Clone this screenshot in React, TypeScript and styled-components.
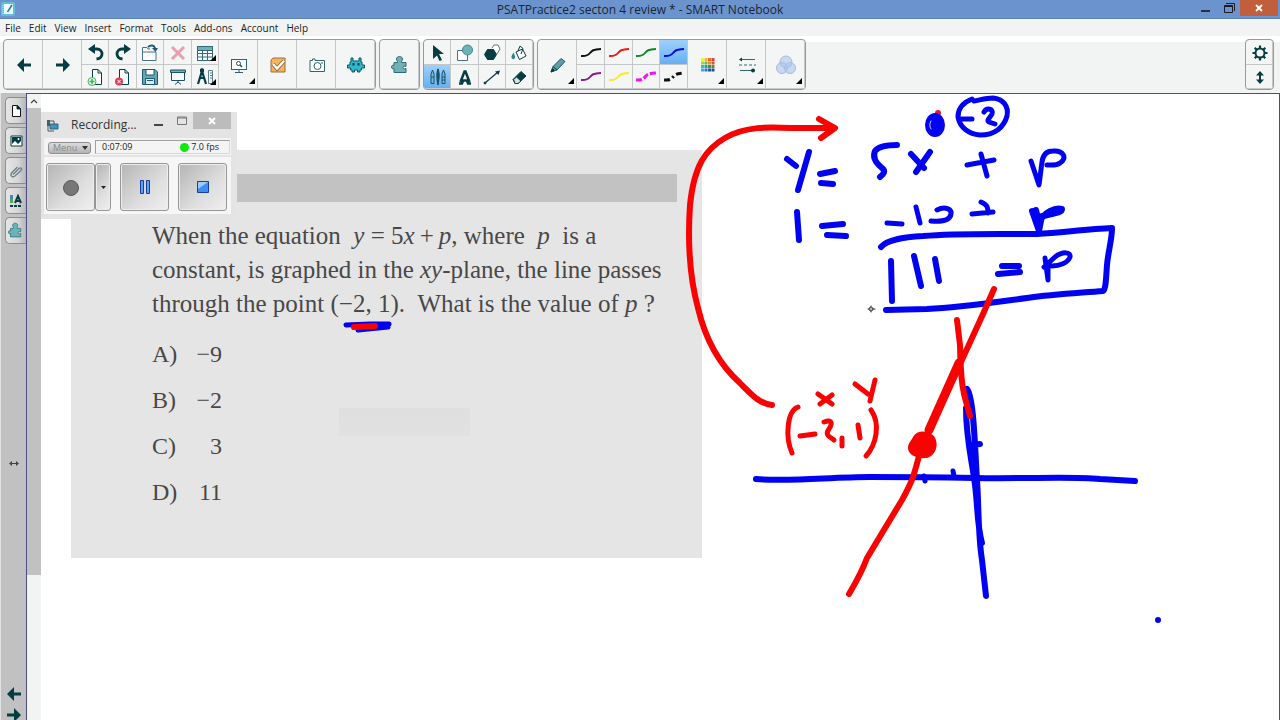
import React from 'react';
import styled, { createGlobalStyle, css } from 'styled-components';

const INK = '#063d42';
const TEAL = '#6fb1b6';
const UI = "'Open Sans', 'Noto Sans', sans-serif";

const GlobalStyle = createGlobalStyle`
  * { box-sizing: border-box; }
  html, body { margin: 0; height: 100%; }
  body { font-family: ${UI}; color: #222; background: #fff; }
  button { font: inherit; color: inherit; padding: 0; margin: 0; border: 0; background: none; }
  svg { display: block; flex: none; }
`;

const Window = styled.div`
  display: flex;
  flex-direction: column;
  height: 100vh;
  overflow: hidden;
`;

const TitleBar = styled.header`
  display: grid;
  grid-template-columns: 1fr auto 1fr;
  height: 19px;
  flex: none;
  background: #6b94cf;
  border-bottom: 1px solid #5d84bd;
`;
const TitleIcon = styled.div`
  padding: 2px 1px;
`;
const Title = styled.h1`
  margin: 0;
  font-size: 12px;
  font-weight: 400;
  line-height: 20px;
  color: #1c2430;
`;
const WindowControls = styled.div`
  display: flex;
  justify-content: flex-end;
  padding-right: 2px;
`;
const ControlButton = styled.button<{ $close?: boolean }>`
  display: flex;
  justify-content: center;
  width: ${p => (p.$close ? 38 : 23)}px;
  height: 16px;
  background: ${p => (p.$close ? '#c15f3d' : 'transparent')};
`;

const MenuBar = styled.nav`
  display: flex;
  gap: 8px;
  height: 17px;
  flex: none;
  padding-left: 5px;
  background: #f2f4f4;
`;
const MenuItem = styled.button`
  font-size: 10px;
  line-height: 18px;
  color: #222;
`;

const Toolbar = styled.div`
  display: flex;
  gap: 3px;
  flex: none;
  padding: 3px 6px 3px 3px;
  background: linear-gradient(#fff 6px, #f2f4f4 6px);
`;
const Group = styled.div<{ $end?: boolean }>`
  display: flex;
  height: 51px;
  border: 1px solid #999;
  border-radius: 4px;
  overflow: hidden;
  background: #f4f5f5;
  ${p => p.$end && css`margin-left: auto;`}
`;
const PairGrid = styled.div<{ $cols: number; $width: number }>`
  display: grid;
  grid-template-columns: repeat(${p => p.$cols}, 1fr);
  grid-template-rows: 25px 24px;
  width: ${p => p.$width}px;
`;
const Tool = styled.button<{ $large?: boolean; $active?: boolean; $more?: boolean }>`
  position: relative;
  display: flex;
  align-items: center;
  justify-content: center;
  ${p => p.$large && css`width: 39px;`}
  background: ${p => (p.$active ? 'linear-gradient(#9fd0fb, #62aff2)' : 'transparent')};
  box-shadow: inset -1px 0 #c6c8c8, inset 0 -1px #c6c8c8;
  ${p => p.$more && css`
    &::after {
      content: '';
      position: absolute;
      right: 3px;
      bottom: ${p.$large ? 5 : 4}px;
      border: 3px solid #000;
      border-top-color: transparent;
      border-left-color: transparent;
    }
  `}
`;

const Workspace = styled.div`
  display: flex;
  flex: 1;
  min-height: 0;
  background: #c1c1c1;
`;
const SideBar = styled.aside`
  display: flex;
  flex-direction: column;
  width: 26px;
  padding-top: 4px;
  border-left: 1px solid #e2e2e2;
`;
const SideTabs = styled.div`
  display: flex;
  flex-direction: column;
  gap: 3px;
  padding-left: 4px;
`;
const SideTab = styled.button`
  display: flex;
  align-items: center;
  justify-content: center;
  height: 27px;
  border: 1px solid #8d8d8d;
  border-right: 0;
  border-radius: 5px 0 0 5px;
  background: linear-gradient(90deg, #e6e6e6, #d6d6d6 60%, #b5b5b5);
`;
const SplitHandle = styled.div`
  display: flex;
  flex: 1;
  align-items: center;
  justify-content: center;
  padding-bottom: 4px;
`;
const PageTurn = styled.div`
  display: flex;
  flex-direction: column;
  align-items: center;
  gap: 7px;
  margin-bottom: -2px;
`;

const PageArea = styled.div`
  display: flex;
  flex: 1;
  min-width: 0;
  border: 1px solid #4a4a8c;
  border-width: 1px 1px 0 1px;
  background: #fff;
`;
const ScrollTrack = styled.div`
  display: flex;
  flex-direction: column;
  width: 14px;
  background: #f2f4f4;
`;
const ScrollUp = styled.button`
  display: flex;
  align-items: center;
  justify-content: center;
  height: 14px;
`;
const ScrollThumb = styled.div`
  height: calc(75% - 3px);
  background: #c1c1c1;
`;
const Canvas = styled.main`
  position: relative;
  flex: 1;
  min-width: 0;
  overflow: hidden;
`;
const Ink = styled.svg`
  position: absolute;
  left: 0;
  top: 0;
  fill: none;
  stroke-linecap: round;
  stroke-linejoin: round;
  pointer-events: none;
`;

const Problem = styled.article`
  position: absolute;
  left: 30px;
  top: 56px;
  width: 631px;
  padding: 24px 25px 49px 81px;
  background: linear-gradient(#dfdfdf, #e1e1e1) 268px 258px / 131px 28px no-repeat #e5e5e5;
  font-family: 'Liberation Serif', serif;
  font-size: 25px;
  line-height: 34px;
  color: #484848;
`;
const HeadingBand = styled.div`
  height: 28px;
  margin-bottom: 17px;
  background: #c2c2c2;
`;
const Question = styled.p`
  margin: 0 0 16px;
  white-space: nowrap;
`;
const Choices = styled.ul`
  display: flex;
  flex-direction: column;
  gap: 12px;
  margin: 0;
  padding: 0;
  list-style: none;
  font-size: 24px;
`;
const Choice = styled.li`
  display: grid;
  grid-template-columns: 30px 40px;
`;
const Answer = styled.span`
  text-align: right;
`;

const Recorder = styled.section`
  position: absolute;
  left: -3px;
  top: 18px;
  width: 199px;
  padding: 0 6px 5px;
  background: #e4e4e4;
`;
const RecorderTitle = styled.header`
  display: flex;
  align-items: center;
  height: 26px;
  padding-left: 1px;
`;
const RecorderName = styled.h2`
  flex: 1;
  margin: 0;
  padding-left: 12px;
  font-size: 12px;
  font-weight: 400;
  line-height: 26px;
  color: #333;
`;
const RecorderControl = styled.button<{ $close?: boolean }>`
  display: flex;
  align-self: flex-start;
  align-items: center;
  justify-content: center;
  width: ${p => (p.$close ? 38 : 23)}px;
  height: 17px;
  background: ${p => (p.$close ? '#bcbcbc' : 'transparent')};
`;
const RecorderStatus = styled.div`
  display: flex;
  gap: 4px;
  height: 17px;
  padding: 2px 1px 0 4px;
  background: #f4f4f4;
  font-size: 9px;
`;
const MenuButton = styled.button`
  display: flex;
  align-items: center;
  gap: 5px;
  width: 43px;
  height: 12px;
  margin-top: 2px;
  padding: 0 4px;
  border: 1px solid #8e8e8e;
  border-radius: 3px;
  background: linear-gradient(#dcdcdc, #b4b4b4);
  color: #8a8a8a;
  line-height: 10px;
  overflow: hidden;
`;
const Readout = styled.div`
  display: flex;
  align-items: center;
  flex: 1;
  height: 14px;
  padding: 0 10px 0 6px;
  border: 1px solid #a0a0a0;
  border-bottom-color: #d8d8d8;
  border-right-color: #d8d8d8;
  color: #222;
  line-height: 12px;
`;
const Fps = styled.span`
  display: flex;
  align-items: center;
  gap: 2px;
  margin-left: auto;
`;
const Lamp = styled.i`
  width: 9px;
  height: 9px;
  border-radius: 50%;
  background: #0bea0b;
`;
const RecorderButtons = styled.div`
  display: flex;
  justify-content: space-between;
  margin-top: 2px;
  padding: 6px 4px 3px 2px;
  height: 57px;
  background: #f6f6f6;
`;
const RecordSplit = styled.div`
  display: flex;
`;
const MediaButton = styled.button<{ $narrow?: boolean }>`
  display: flex;
  align-items: center;
  justify-content: center;
  width: ${p => (p.$narrow ? 16 : 49)}px;
  height: 48px;
  border: 1px solid #969696;
  border-radius: 3px;
  box-shadow: inset 0 0 0 1px #eee;
  background: linear-gradient(135deg, #b4b4b4, #dedede 60%, #efefef);
`;

type IconProps = { children: React.ReactNode; w?: number; h?: number };
const Icon = ({ children, w = 20, h = 20 }: IconProps) => (
  <svg width={w} height={h} viewBox={`0 0 ${w} ${h}`} fill="none" stroke={INK} aria-hidden="true">
    {children}
  </svg>
);

const arrowLeft = <path d="M1 7 8 0V5.500H15V8.500H8V14Z" fill={INK} stroke="none" />;
const arrowRight = <path d="M15 7 8 0V5.500H1V8.500H8V14Z" fill={INK} stroke="none" />;
const docShape = 'M6.500 2.500H12L15.500 6V17.500H6.500Z';
const puzzle =
  'M3 7.500H6.500C7 6.500 5.500 5.500 5.500 4C5.500 2.500 6.800 1.500 8.500 1.500S11.500 2.500 11.500 4C11.500 5.500 10 6.500 10.500 7.500H15V11.500C14 11.500 13 10.500 12 12C11.500 13.500 13 14.500 15 13.500V17.500H3V13.500C2 14.500 .5 13.500 .5 12S2 9.500 3 10.500Z';

const pageTools: [string, React.ReactNode, boolean?][] = [
  ['Undo', <g key="a"><path d="M6 6H11C14 6 16 8 16 11S14 15.500 10.500 16" strokeWidth="2.800" /><path d="M2 6 9 1V11Z" fill={INK} stroke="none" /></g>],
  ['Redo', <g key="a"><path d="M14 6H9C6 6 4 8 4 11S6 15.500 9.500 16" strokeWidth="2.800" /><path d="M18 6 11 1V11Z" fill={INK} stroke="none" /></g>],
  ['Open', <g key="a" stroke="#46728a"><path d="M2.500 17.500V4.500H7L8 6H10M16 9V17.500H2.500M2.500 9H16" fill="#fff" /><path d="M8 4C11 1.500 14 2 15 5" stroke="#1f5878" strokeWidth="2" /><path d="M12 5H18L15.500 9Z" fill="#1f5878" stroke="none" /></g>],
  ['Delete', <path d="M4 4 16 16M16 4 4 16" stroke="#ec9db0" strokeWidth="3" key="a" />],
  ['Table', <g key="a" stroke="#2f6a76"><rect x="2.500" y="3.500" width="15" height="14" fill="#fff" /><path d="M2.500 3.500H17.500V7.500H2.500Z" fill={TEAL} /><path d="M2.500 10.500H17.500M2.500 14H17.500M7.500 7.500V17.500M12.500 7.500V17.500" /></g>, true],
  ['Add page', <g key="a"><path d={docShape} fill="#fff" /><path d="M12 2.500V6H15.500" /><circle cx="6" cy="14.500" r="4" fill="#e9f8e9" stroke="#3cb55c" /><path d="M6 12V17M3.500 14.500H8.500" stroke="#3cb55c" strokeWidth="1.500" /></g>],
  ['Delete page', <g key="a"><path d={docShape} fill="#fff" /><path d="M12 2.500V6H15.500" /><circle cx="6" cy="14.500" r="4" fill="#e0405c" stroke="none" /><path d="M4.500 13 7.500 16M7.500 13 4.500 16" stroke="#fff" /></g>],
  ['Save', <g key="a" stroke="#1f5a70"><path d="M2.500 2.500H15L17.500 5V17.500H2.500Z" fill="#65a5b5" /><path d="M6 2.500H14V8H6Z" fill="#fff" /><path d="M5.500 11.500H14.500V17.500H5.500Z" fill="#d9eaee" /><path d="M7 13.500H13" /></g>],
  ['Screen shade', <g key="a" stroke="#1f5060"><path d="M3.500 5V13.500H16.500V5" fill="#f4fafb" /><path d="M2.500 3H17.500V5.500H2.500Z" fill={TEAL} /><path d="M10 13.500V15M7 17.500 10 15 13 17.500" /></g>],
  ['Measurement tools', <g key="a"><path d="M3 17 7 4 11 17M5 11H10" strokeWidth="2.200" /><path d="M5.500 2H8.500V5H5.500Z" fill={INK} /><path d="M13.500 3.500H17.500V16.500H13.500ZM15 6H17M15 8.500H17M15 11H17" stroke="#5b7f84" /></g>, true],
];

const Squiggle = ({ color, dash, width = 2 }: { color: string; dash?: string; width?: number }) => (
  <Icon><path d="M0 13C5 13.500 7 12.500 9 10S12 6.500 20 6" stroke={color} strokeWidth={width} strokeDasharray={dash} /></Icon>
);

const pens: [string, string, string?, number?][] = [
  ['Black pen', '#111'], ['Red pen', '#f21616'], ['Green pen', '#118a22'], ['Blue pen', '#0909d8'],
  ['Purple pen', '#851a92'], ['Yellow pen', '#f7ee1c'],
  ['Magenta dashed pen', '#f010f0', '6 2', 3], ['Black dashed pen', '#111', '6 3 2 3', 3],
];

const drawTools: [string, React.ReactNode][] = [
  ['Select', <path key="a" d="M5 2 16 11H11L14 17 11.500 18 9 12.500 5 16Z" fill={INK} stroke="none" />],
  ['Shapes', <g key="a"><path d="M2.500 7.500H12.500V17.500H2.500Z" fill="#fff" stroke="#46727e" /><circle cx="12.500" cy="7" r="5" fill={TEAL} stroke="#3f8791" /></g>],
  ['Regular polygons', <g key="a"><path d="M10 5 12 2H16L18 6 15 11" stroke="#56797e" fill="#fff" /><path d="M5.500 6.500H11.500L14.500 11.500 11.500 16.500H5.500L2.500 11.500Z" fill={INK} /></g>],
  ['Fill', <g key="a"><path d="M7 9 13.500 6 17 13 10.500 16.500Z" fill="#fff" /><path d="M9 8 11 3 14 5.500 12 11" /><path d="M4.500 9.500C2.500 13 2 14 3 15.500S6 16 6 14 5 11 4.500 9.500Z" fill="#2f8087" stroke="none" /></g>],
  ['Pens', <g key="a" stroke="#17536a"><path d="M3 7 4.500 3 6 7V16.500H3ZM14 7 15.500 3 17 7V16.500H14Z" fill="#7fb6d6" /><path d="M3 10H6M14 10H17M14 13H17" /><path d="M9 7 10 2 11 7V10L10 18 9 10Z" fill="#17536a" strokeWidth="1.500" /></g>],
  ['Text', <path key="a" d="M4 16.500H7L8 13.500H12L13 16.500H16M5.500 15 9.500 4.500H10.500L14.500 15" strokeWidth="2.500" />],
  ['Line', <g key="a"><path d="M3 16 16 5" strokeWidth="1.200" /><path d="M18 3.500 16.500 8 13 4.500Z" fill={INK} stroke="none" /><circle cx="3" cy="16" r="1" fill={INK} /></g>],
  ['Eraser', <g key="a"><path d="M4 12.500 12 4.500 17 9 9 16.500H6Z" fill={INK} /><path d="M4.500 12.500 7.500 10 12 14 9 16.500H6Z" fill="#d5e2e3" /></g>],
];

const swatches = ['#f8f02a', '#f9b828', '#ef6a34', '#e04038', '#a0d83a', '#50bc54', '#e88c34', '#c85c38', '#38bcc8', '#1f9cae', '#3a9448', '#6c8434', '#3aa8ea', '#2476cc', '#2850a8', '#244c84'];

export default function App() {
  return (
    <>
      <GlobalStyle />
      <Window>
        <TitleBar>
          <TitleIcon>
            <Icon w={14} h={14}>
              <rect width="14" height="14" rx="2" fill="#5cc0d8" stroke="none" />
              <path d="M3 2H12V12H3Z" fill="#eefafc" stroke="none" />
              <path d="M6.500 10 11 3" stroke="#2a7a90" strokeWidth="1.500" />
              <path d="M2 3V12" stroke="#d6f2f7" strokeDasharray="1 1" />
            </Icon>
          </TitleIcon>
          <Title>PSATPractice2 secton 4 review * - SMART Notebook</Title>
          <WindowControls>
            <ControlButton aria-label="Minimize"><Icon w={11} h={16}><path d="M1 11H10" stroke="#111" strokeWidth="1.500" /></Icon></ControlButton>
            <ControlButton aria-label="Restore"><Icon w={12} h={16}><path d="M1.500 5.500H9.500V12.500H1.500ZM1.500 6.500H9.500M3 3.500H11.500V11" stroke="#1b1b24" /></Icon></ControlButton>
            <ControlButton $close aria-label="Close"><Icon w={10} h={16}><path d="M2 5 8 11M8 5 2 11" stroke="#fff" strokeWidth="1.800" /></Icon></ControlButton>
          </WindowControls>
        </TitleBar>

        <MenuBar>
          {['File', 'Edit', 'View', 'Insert', 'Format', 'Tools', 'Add-ons', 'Account', 'Help'].map(m => <MenuItem key={m}>{m}</MenuItem>)}
        </MenuBar>

        <Toolbar>
          <Group>
            <Tool $large aria-label="Previous page"><Icon w={16} h={14}>{arrowLeft}</Icon></Tool>
            <Tool $large aria-label="Next page"><Icon w={16} h={14}>{arrowRight}</Icon></Tool>
            <PairGrid $cols={5} $width={137}>
              {pageTools.map(([name, art, more]) => (
                <Tool key={name} aria-label={name} $more={more}><Icon>{art}</Icon></Tool>
              ))}
            </PairGrid>
            <Tool $large $more aria-label="View screens">
              <Icon>
                <rect x="2.500" y="4.500" width="15" height="10" fill="#fff" stroke="#2a6478" />
                <circle cx="9.500" cy="8.500" r="2" stroke="#17506a" /><path d="M11 10 13 12" stroke="#17506a" strokeWidth="1.500" />
                <path d="M10 14.500V17M6 17.500H14" stroke="#2a6478" />
              </Icon>
            </Tool>
            <Tool $large aria-label="Response">
              <Icon>
                <path d="M5 3H17V17H3V5Z" fill="#f5b45e" stroke="#9a7038" />
                <path d="M5 9 9 13.500 16 6" stroke="#8a6030" strokeWidth="4" /><path d="M5 9 9 13.500 16 6" stroke="#fff" strokeWidth="2.500" />
              </Icon>
            </Tool>
            <Tool $large aria-label="Camera">
              <Icon>
                <path d="M3 5.500H5.500V4H8V5.500H17.500V16.500H3Z" fill="#fff" stroke="#2f666a" />
                <circle cx="10.500" cy="11" r="3.500" stroke="#2f666a" /><path d="M14 8H16" stroke="#2f666a" />
              </Icon>
            </Tool>
            <Tool $large aria-label="Activity builder">
              <Icon>
                <path d="M5 3H7V6H13V3H15V7H16V10H18.500V13H15.500V15H14V17H11.500V15H8.500V17H6V15H4.500V13H1.500V10H4V7H5Z" fill="#2fb8cc" stroke="#0c5668" />
                <path d="M6.500 8H8.500V10.500H6.500ZM11.500 8H13.500V10.500H11.500Z" fill={INK} stroke="none" />
              </Icon>
            </Tool>
          </Group>

          <Group>
            <Tool $large aria-label="Add-ons"><Icon w={18} h={20}><path d={puzzle} fill={TEAL} stroke="#2c6b74" /></Icon></Tool>
          </Group>

          <Group>
            <PairGrid $cols={4} $width={109}>
              {drawTools.map(([name, art]) => (
                <Tool key={name} aria-label={name} $active={name === 'Pens'}><Icon>{art}</Icon></Tool>
              ))}
            </PairGrid>
          </Group>

          <Group>
            <Tool $large $more aria-label="Pen type">
              <Icon><path d="M3 17 5 11.500 13 3.500 17 6.500 9 15Z" fill="#5c9ea6" stroke="#1f5c66" /><path d="M5 11.500 9 15M3 17 4.500 13.500 6.500 15.500Z" fill={INK} /></Icon>
            </Tool>
            <PairGrid $cols={4} $width={111}>
              {pens.map(([name, color, dash, width]) => (
                <Tool key={name} aria-label={name} $active={name === 'Blue pen'}><Squiggle color={color} dash={dash} width={width} /></Tool>
              ))}
            </PairGrid>
            <Tool $large $more aria-label="Color">
              <svg width="16" height="16" viewBox="0 0 16 16" aria-hidden="true">
                {swatches.map((c, i) => <rect key={i} x={1 + (i % 4) * 3.5} y={1 + Math.floor(i / 4) * 3.5} width="3" height="3" fill={c} />)}
              </svg>
            </Tool>
            <Tool $large $more aria-label="Line style">
              <Icon>
                <path d="M4 4.500H18M3 15.500H15" stroke="#33666e" /><path d="M2 10H19" stroke="#33666e" strokeDasharray="3 2" />
                <path d="M2 4.500 5 2.500V6.500Z" fill={INK} stroke="none" /><circle cx="16" cy="15.500" r="2" fill={INK} stroke="none" />
              </Icon>
            </Tool>
            <Tool $large $more aria-label="Transparency">
              <Icon w={22} h={22}>
                <g fill="#a9c4f0" fillOpacity=".6" stroke="#a9badd"><circle cx="7" cy="14" r="5.500" /><circle cx="15" cy="14" r="5.500" /><circle cx="11" cy="8" r="6" /></g>
              </Icon>
            </Tool>
          </Group>

          <Group $end>
            <PairGrid $cols={1} $width={27}>
              <Tool aria-label="Customize toolbar">
                <Icon>
                  <circle cx="10" cy="10" r="4.500" strokeWidth="2" />
                  <path d="M10 2.500V5M10 15V17.500M2.500 10H5M15 10H17.500M4.700 4.700 6.500 6.500M13.500 13.500 15.300 15.300M4.700 15.300 6.500 13.500M13.500 6.500 15.300 4.700" strokeWidth="2.200" />
                </Icon>
              </Tool>
              <Tool aria-label="Move toolbar">
                <Icon><path d="M10 6V15" strokeWidth="2" /><path d="M10 4 14 8.500H6ZM10 17 14 12.500H6Z" fill={INK} stroke="none" /></Icon>
              </Tool>
            </PairGrid>
          </Group>
        </Toolbar>

        <Workspace>
          <SideBar>
            <SideTabs>
              <SideTab aria-label="Page sorter"><Icon w={16} h={16}><path d="M4.500 2.500H9.500L12.500 5.500V13.500H4.500Z" fill="#fff" stroke="#111" /><path d="M9 2V6H13Z" fill="#111" /></Icon></SideTab>
              <SideTab aria-label="Gallery"><Icon w={16} h={16}><path d="M3 3H14V13H3Z" fill="#fff" stroke={INK} /><path d="M4 4H13V8L10 11 7 8 4 11Z" fill={INK} stroke="none" /><circle cx="10.500" cy="6" r="1" fill="#fff" stroke="none" /></Icon></SideTab>
              <SideTab aria-label="Attachments"><Icon w={16} h={16}><path d="M5 11.500 11 5.500C13 4 14.500 5.500 13 7.500L7 13C4 15 1.500 12.500 4 9.500L9.500 4" stroke="#698086" strokeWidth="1.300" /></Icon></SideTab>
              <SideTab aria-label="Properties"><Icon w={16} h={16}><path d="M2 2H5V6H2Z" fill="#4b8aa8" stroke="none" /><path d="M2 6H5V10H2Z" fill="#50a850" stroke="none" /><path d="M7 10 10 3 13 10M8 8H12" strokeWidth="2" /><path d="M2 13H14" strokeDasharray="3 1" strokeWidth="2" /></Icon></SideTab>
              <SideTab aria-label="Add-ons"><Icon w={16} h={18}><path d={puzzle} fill={TEAL} stroke="#2c7b80" transform="scale(.85)" /></Icon></SideTab>
            </SideTabs>
            <SplitHandle>
              <Icon w={10} h={7}><path d="M2 3.500H8" stroke="#444" /><path d="M0 3.500 3 1V6ZM10 3.500 7 1V6Z" fill="#444" stroke="none" /></Icon>
            </SplitHandle>
            <PageTurn>
              <button aria-label="Previous page"><Icon w={16} h={14}>{arrowLeft}</Icon></button>
              <button aria-label="Next page"><Icon w={16} h={14}>{arrowRight}</Icon></button>
            </PageTurn>
          </SideBar>

          <PageArea>
            <ScrollTrack>
              <ScrollUp aria-label="Scroll up"><Icon w={8} h={6}><path d="M1 5 4 2 7 5" stroke="#444" strokeWidth="1.200" /></Icon></ScrollUp>
              <ScrollThumb />
            </ScrollTrack>
            <Canvas>
              <Problem>
                <HeadingBand />
                <Question>
                  When the equation &nbsp;<i>y</i> = 5<i>x</i>&thinsp;+&thinsp;<i>p</i>, where &nbsp;<i>p</i> &nbsp;is a<br />
                  constant, is graphed in the <i>xy</i>-plane, the line passes<br />
                  through the point (−2, 1). &nbsp;What is the value of <i>p</i> ?
                </Question>
                <Choices>
                  {[['A)', '−9'], ['B)', '−2'], ['C)', '3'], ['D)', '11']].map(([k, v]) => (
                    <Choice key={k}><span>{k}</span><Answer>{v}</Answer></Choice>
                  ))}
                </Choices>
              </Problem>

              <Ink width="1238" height="626" viewBox="41 94 1238 626" role="img" aria-label="Handwritten solution and graph">
                <g stroke="#0202f2" strokeWidth="6">
                  <path d="M346 325 370 324 389 324M358 330 388 327" strokeWidth="5" />
                  <path d="M756 479C790 482 830 477 870 477S920 477 975 478 1070 476 1100 479L1135 481" />
                  <path d="M967 389C974 397 975 450 977 480S978 535 982 560L986 596M966 408C966 440 972 460 975 485S977 525 982 543M972 445 980 444" />
                  <path d="M924 476 925 481M953 471 954 476" strokeWidth="5" />
                  <path d="M1158 620V620" />
                  <path d="M787 159 796 166M809 152 798 190M820 174 835 171M821 183 833 184M797 212 799 240M822 226 843 224M827 235 846 236" />
                  <path d="M897 145C885 145 878 147 875 151C872 158 877 164 882 168C886 171 884 174 880 177M911 154 924 168M930 152 916 172" />
                  <path d="M967 165 994 160M981 154 987 176M1031 161 1039 185 1042 162C1043 154 1047 151 1053 151C1063 150 1068 158 1060 163C1056 166 1052 165 1047 165" strokeWidth="5" />
                  <path d="M887 223 902 224M916 207 920 223M937 210C945 206 952 209 951 214C950 220 942 222 931 221M972 214 993 212M981 202C988 205 988 208 988 213" strokeWidth="5" />
                  <path d="M1032 211 1039 231 1042 216M1036 210 1039 222C1045 212 1055 207 1062 209C1062 213 1055 213 1044 216" />
                  <path d="M881 247C888 239 905 237 923 236C955 233 1000 234 1037 234C1065 232 1090 229 1112 228C1112 240 1108 252 1107 265C1106 278 1106 289 1103 291C1080 293 1055 294 1027 298C995 302 965 307 927 309L886 310" />
                  <path d="M891 261 892 301M914 256 921 286M935 259 939 281M1002 266 1019 266M998 274 1020 272" />
                  <path d="M1045 258 1048 280 1048 267M1044 267 1055 257C1063 251 1071 252 1070 257C1068 263 1059 266 1052 266" strokeWidth="5" />
                  <path d="M972 99C962 103 958 109 958 117C960 128 969 134 980 135C995 135 1004 127 1007 116C1009 106 1003 99 993 98C986 98 980 100 974 101M960 119 972 119M984 112C987 107 994 109 992 114C990 118 986 120 989 122L995 124" strokeWidth="5" />
                </g>
                <circle cx="938" cy="113" r="3" fill="#e01830" />
                <ellipse cx="935" cy="125" rx="10" ry="12" fill="#0202f2" />
                <path d="M931 121C929 125 930 127 931 129" stroke="#dfe0ff" />
                <g stroke="#f80202" strokeWidth="6">
                  <path d="M354 327 375 326" />
                  <path d="M772 405C760 404 752 395 740 383C721 366 706 342 698 308C689 275 688 235 690 205C694 165 706 149 725 138C745 126 770 127 790 128L829 128M819 119 835 128 821 138" />
                  <path d="M994 289 983 314 961 362 929 431 919 456C914 475 913 480 902 500L867 558C861 574 856 582 849 594M957 320 960 345C961 395 965 396 970 416" />
                  <path d="M959 363 929 430" strokeWidth="9" />
                  <path d="M818 394 832 404M832 395 820 404M855 384 868 394M875 380 870 401" strokeWidth="5" />
                  <path d="M798 407C787 411 785 437 792 453M871 410C881 424 876 445 866 456M800 436 815 434M824 422C830 420 834 421 829 429C824 436 831 437 834 440M842 438V446M858 425 860 438" strokeWidth="5" />
                </g>
                <path d="M913 437C917 430 927 430 934 436C940 445 935 456 927 458C917 459 908 455 908 448C908 443 911 441 913 437Z" fill="#f80202" />
                <path d="M871 306V308M871 310V312M868 309H870M872 309H875" stroke="#333" />
                <circle cx="871" cy="309" r="2" stroke="#444" />
              </Ink>

              <Recorder aria-label="Recording">
                <RecorderTitle>
                  <Icon w={14} h={14}>
                    <path d="M2 2H5V8H2Z" fill="#44606e" stroke="none" /><path d="M5 6H13V11H5Z" fill="#3d93bd" stroke="#2c667e" />
                    <path d="M5 3H9V6M3 8V13H9" stroke="#555" />
                  </Icon>
                  <RecorderName>Recording...</RecorderName>
                  <RecorderControl aria-label="Minimize"><Icon w={10} h={16}><path d="M0 12H9" stroke="#111" strokeWidth="1.500" /></Icon></RecorderControl>
                  <RecorderControl aria-label="Maximize"><Icon w={12} h={12}><path d="M1.500 2H10.500V9.500H1.500ZM1.500 3H10.500" stroke="#777" /></Icon></RecorderControl>
                  <RecorderControl $close aria-label="Close"><Icon w={8} h={8}><path d="M1 1 7 7M7 1 1 7" stroke="#fff" strokeWidth="2" /></Icon></RecorderControl>
                </RecorderTitle>
                <RecorderStatus>
                  <MenuButton>Menu<Icon w={6} h={4}><path d="M0 0H6L3 4Z" fill="#333" stroke="none" /></Icon></MenuButton>
                  <Readout><span>0:07:09</span><Fps><Lamp />7.0 fps</Fps></Readout>
                </RecorderStatus>
                <RecorderButtons>
                  <RecordSplit>
                    <MediaButton aria-label="Record"><Icon><circle cx="10" cy="11" r="7.500" fill="#777" stroke="#5c5c5c" /></Icon></MediaButton>
                    <MediaButton $narrow aria-label="Record options"><Icon w={5} h={3}><path d="M0 0H5L2.500 3Z" fill="#222" stroke="none" /></Icon></MediaButton>
                  </RecordSplit>
                  <MediaButton aria-label="Pause"><Icon w={12} h={14}><path d="M1.500 .5H4.500V13.500H1.500ZM7.500 .5H10.500V13.500H7.500Z" fill="#5aa2f4" stroke="#173f9c" /></Icon></MediaButton>
                  <MediaButton aria-label="Stop"><Icon w={12} h={12}><path d="M.5 .5H11.500V11.500H.5Z" fill="#3f8df0" stroke="#173f9c" /><path d="M1 1H11L1 8Z" fill="#9accff" stroke="none" /></Icon></MediaButton>
                </RecorderButtons>
              </Recorder>
            </Canvas>
          </PageArea>
        </Workspace>
      </Window>
    </>
  );
}
